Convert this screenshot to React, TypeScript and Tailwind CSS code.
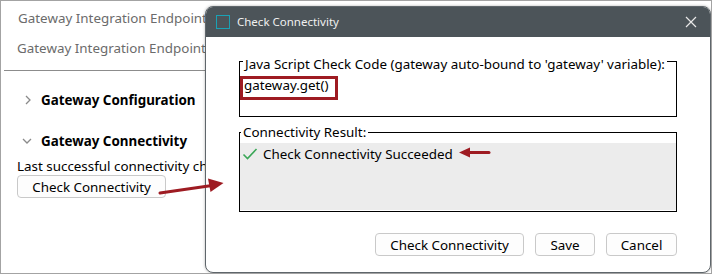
import React from "react";

function Chevron({ dir }: { dir: "right" | "down" }) {
  return dir === "right" ? (
    <svg width="10" height="12" viewBox="0 0 10 12" className="shrink-0">
      <path d="M3 2 L7 6 L3 10" fill="none" stroke="#8a8a8a" strokeWidth="1.3" />
    </svg>
  ) : (
    <svg width="12" height="10" viewBox="0 0 12 10" className="shrink-0">
      <path d="M2 3 L6 7 L10 3" fill="none" stroke="#8a8a8a" strokeWidth="1.3" />
    </svg>
  );
}

export default function App() {
  return (
    <div className="relative w-[712px] h-[274px] border border-[#a3a3a3] bg-white overflow-hidden font-['Noto_Sans',sans-serif] text-[13.4px] text-black">
      {/* Background page */}
      <div className="flex flex-col">
        <div className="pl-[17px] pt-[7px] h-[37px] leading-[20px] text-[#6b6b6b] whitespace-nowrap">
          Gateway Integration Endpoint
        </div>
        <div className="pl-[16px] h-[32px] leading-[20px] text-[#6b6b6b] whitespace-nowrap">
          Gateway Integration Endpoint
        </div>
        <div className="ml-[3px] h-px w-[205px] bg-[#8c8c8c]" />
        <div className="flex items-center gap-[8px] pl-[22px] mt-[19px] h-[20px] whitespace-nowrap">
          <Chevron dir="right" />
          <span className="font-bold">Gateway Configuration</span>
        </div>
        <div className="flex items-center gap-[8px] pl-[20px] mt-[21px] h-[20px] whitespace-nowrap">
          <Chevron dir="down" />
          <span className="font-bold">Gateway Connectivity</span>
        </div>
        <div className="pl-[16px] mt-[5px] h-[20px] leading-[20px] whitespace-nowrap">
          Last successful connectivity check
        </div>
        <div className="pl-[16px] mt-[-1px]">
          <button className="h-[23px] w-[149px] rounded-[4px] border border-[#c9c9c9] bg-[#fdfdfd] leading-[20px] text-center">
            Check Connectivity
          </button>
        </div>
      </div>

      {/* Dialog */}
      <div className="absolute left-[204px] top-[5px] w-[506px] h-[267px] rounded-[8px] border border-[#5f666b] bg-white overflow-hidden flex flex-col shadow-[0_0_3px_rgba(0,0,0,0.3)]">
        <div className="h-[30px] bg-[#4c5459] flex items-center pl-[10px] pr-[8px] shrink-0">
          <div className="w-[14px] h-[14px] border-[1.5px] border-[#1aa2b5]" />
          <span className="ml-[7px] text-[11.5px] text-[#f0f0f0] leading-[16px]">Check Connectivity</span>
          <svg width="12" height="12" viewBox="0 0 12 12" className="ml-auto mr-[5px]">
            <path d="M1 1 L11 11 M11 1 L1 11" stroke="#e8e8e8" strokeWidth="1.2" />
          </svg>
        </div>
        <div className="flex flex-col px-[33px] pt-[12px]">
          <fieldset className="border border-black px-[2px] h-[68px]">
            <legend className="ml-[1px] px-[2px] pt-[5px] leading-[20px] whitespace-nowrap">
              Java Script Check Code (gateway auto-bound to 'gateway' variable):
            </legend>
            <div className="leading-[20px] pt-[1px] pl-[2px]">gateway.get()</div>
          </fieldset>
          <fieldset className="mt-[5px] border border-black h-[90px]">
            <legend className="ml-[1px] px-[2px] leading-[20px] whitespace-nowrap">Connectivity Result:</legend>
            <div className="h-[67px] bg-[#ececec] mt-[1px] flex items-start gap-[5px] pl-[2px] pt-[1px]">
              <svg width="16" height="14" viewBox="0 0 16 14" className="mt-[3px] shrink-0">
                <path d="M1.5 7.5 L5.5 11.5 L14.5 2" fill="none" stroke="#3aa757" strokeWidth="1.6" />
              </svg>
              <span className="leading-[20px]">Check Connectivity Succeeded</span>
            </div>
          </fieldset>
          <div className="flex justify-end gap-[11px] mt-[21px]">
            <button className="h-[23px] w-[149px] rounded-[4px] border border-[#c9c9c9] bg-[#fdfdfd] leading-[20px]">
              Check Connectivity
            </button>
            <button className="h-[23px] w-[60px] rounded-[4px] border border-[#c9c9c9] bg-[#fdfdfd] leading-[20px]">
              Save
            </button>
            <button className="h-[23px] w-[71px] rounded-[4px] border border-[#c9c9c9] bg-[#fdfdfd] leading-[20px]">
              Cancel
            </button>
          </div>
        </div>
      </div>

      {/* Annotations */}
      <div className="absolute left-[239px] top-[75px] w-[98px] h-[24px] border-[3px] border-[#9e1b22]" />
      <svg className="absolute left-0 top-0" width="712" height="274" viewBox="0 0 712 274">
        <path d="M159 192 L211 184.5" stroke="#9e1b22" strokeWidth="3" strokeLinecap="round" />
        <path d="M222.5 182 L207 177.5 L209.5 191 Z" fill="#9e1b22" />
        <path d="M488 151.5 L465 151.5" stroke="#9e1b22" strokeWidth="3" strokeLinecap="round" />
        <path d="M458 151.5 L469 146.5 L469 156.5 Z" fill="#9e1b22" />
      </svg>
    </div>
  );
}
